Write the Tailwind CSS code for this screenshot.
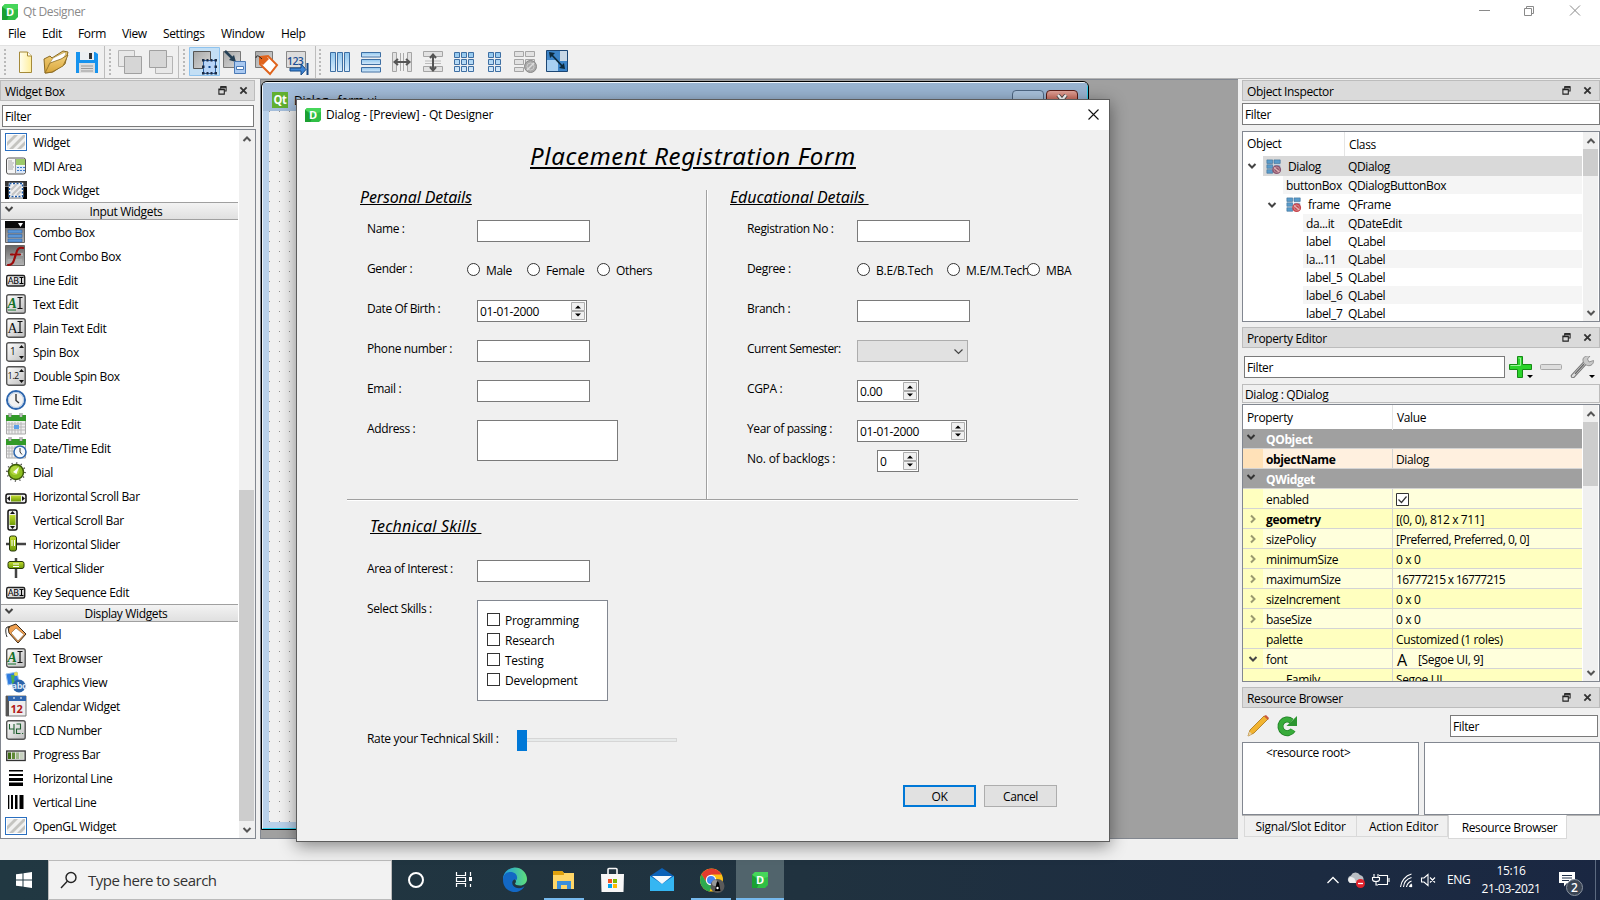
<!DOCTYPE html>
<html lang="en">
<head>
<meta charset="utf-8">
<title>Qt Designer</title>
<script src="https://cdn.jsdelivr.net/npm/@tailwindcss/browser@4"></script>
</head>
<body class="relative w-[1600px] h-[900px] overflow-hidden bg-[#f0f0f0] font-['Open_Sans','Noto_Sans',sans-serif] text-[12px] leading-4 tracking-[-0.36px] text-black whitespace-nowrap">

<svg class="absolute w-0 h-0">
  <defs>
    <linearGradient id="grey" x1="0" y1="0" x2="1" y2="1"><stop offset="0" stop-color="#fff"/><stop offset="1" stop-color="#bdbdbd"/></linearGradient>
    <linearGradient id="dark" x1="0" y1="0" x2="0" y2="1"><stop offset="0" stop-color="#666"/><stop offset="1" stop-color="#b4b4b4"/></linearGradient>
    <linearGradient id="tool" x1="0" y1="0" x2="1" y2="1"><stop offset="0" stop-color="#a8a8a8"/><stop offset="1" stop-color="#d8d8d8"/></linearGradient>
    <linearGradient id="blue" x1="0" y1="0" x2="0" y2="1"><stop offset="0" stop-color="#8fc6ee"/><stop offset="1" stop-color="#d8ebfb"/></linearGradient>
    <linearGradient id="lime" x1="0" y1="0" x2="0" y2="1"><stop offset="0" stop-color="#c3dc30"/><stop offset="1" stop-color="#6f9c08"/></linearGradient>
    <linearGradient id="paper" x1="0" y1="0" x2="1" y2="0"><stop offset="0" stop-color="#fffef0"/><stop offset="1" stop-color="#ffee9a"/></linearGradient>
    <linearGradient id="gold" x1="0" y1="0" x2="0" y2="1"><stop offset="0" stop-color="#f3d27e"/><stop offset="1" stop-color="#d9a63b"/></linearGradient>
    <linearGradient id="edge" x1="0" y1="0" x2="1" y2="0"><stop offset="0" stop-color="#1f9be0"/><stop offset="1" stop-color="#5fe07a"/></linearGradient>
    <symbol id="i-logo" viewBox="0 0 16 16"><path d="M3 0h13v13l-3 3H0V3z" fill="#2fbf45"/><path d="M3 0h13v5L8 7 0 3z" fill="#46d65a"/><path d="M0 3l8 6-3 7H0z" fill="#1ba032"/><text x="8" y="12" text-anchor="middle" font-size="11" font-weight="700" font-family="Open Sans" fill="#fff">D</text></symbol>
    <symbol id="i-stripe" viewBox="0 0 22 18"><rect x=".5" y=".5" width="21" height="17" fill="#fff" stroke="#2a6fc0"/><path d="M2 2h18v14H2z" fill="#f1f1f0"/><path d="M2 9l7-7h4L2 13zM4 16L18 2h2v2L8 16zM12 16l8-8v4l-4 4z" fill="#c4c4c0"/></symbol>
    <symbol id="i-mdi" viewBox="0 0 22 20"><rect x="1.500" y="2" width="19" height="16" rx="2" fill="#f4f4f4" stroke="#555"/><path d="M11 3h9v6h-9z" fill="#9cc96a"/><path d="M11 10h9v7h-9z" fill="#dce9fa"/><path d="M12 11h2v1h-2zm3 0h2v1h-2zm3 0h2v1h-2zm-6 3h2v1h-2zm3 0h2v1h-2zm3 0h2v1h-2z" fill="#3f7fd0"/><path d="M3 5h4M3 7h6M3 9h5M3 11h6M3 13h5" stroke="#aaa"/><path d="M10.500 3v14" stroke="#999"/></symbol>
    <symbol id="i-dock" viewBox="0 0 22 18"><path d="M0 0h22v18H0z" fill="url(#dark)"/><path d="M0 0h22v5H0z" fill="#111" opacity=".6"/><path d="M0 6h4v12H0zM18 6h4v12h-4z" fill="#000"/><rect x="4.500" y="2.500" width="13" height="13" fill="#eee" stroke="#fff" stroke-width="1.500"/><rect x="4.500" y="2.500" width="13" height="13" fill="none" stroke="#1b58a8" stroke-width="1.500" stroke-dasharray="2 1.500"/><path d="M6 9l6-6M7 14l9-9M12 14l4-4" stroke="#c4c4c4" stroke-width="2"/></symbol>
    <symbol id="i-combo" viewBox="0 0 22 22"><path d="M.5.500h19v21H.5z" fill="url(#dark)" stroke="#666"/><path d="M0 0h20v7H0z" fill="#0a0a0a"/><path d="M13 2h5l-2.500 4z" fill="#fff"/><path d="M3 9h14v3H3zM3 13.500h14v3H3zM3 18h14v3H3z" fill="#5a96d8" stroke="#2d5f9e" stroke-width=".5"/></symbol>
    <symbol id="i-font" viewBox="0 0 22 22"><path d="M.5.500h19v20H.5z" fill="url(#dark)" stroke="#666"/><path d="M8 8h10v3H8zM3 14h14v3H3z" fill="#aaa"/><path d="M18 3c-4-1-6 1-7 6l-2 6c-1 4-3 5-6 5M6 9.500h9" fill="none" stroke="#9c0b0b" stroke-width="2.200" stroke-linecap="round"/></symbol>
    <symbol id="i-line" viewBox="0 0 22 22"><rect x="1.700" y="6.500" width="18" height="10.500" rx="1.500" fill="url(#grey)" stroke="#222" stroke-width="1.400"/><text x="2.800" y="14.800" font-size="8.500" letter-spacing="-.4" font-family="DejaVu Sans" fill="#000">AB</text><path d="M14.500 8.500h4M16.500 8.500v6M14.500 14.500h4" stroke="#000"/></symbol>
    <symbol id="i-btn" viewBox="0 0 22 22"><rect x="1.700" y="1.700" width="18.500" height="18.500" rx="2" fill="url(#grey)" stroke="#555" stroke-width="1.400"/></symbol>
    <symbol id="i-text" viewBox="0 0 22 22"><use href="#i-btn"/><text x="2.500" y="15" font-size="14" font-style="italic" font-family="Liberation Serif" fill="#13702a" font-weight="700">A</text><path d="M3 17h8" stroke="#13702a"/><path d="M12.500 4.500h5M15 4.500v11M12.500 15.500h5" stroke="#111" stroke-width="1.200"/></symbol>
    <symbol id="i-plain" viewBox="0 0 22 22"><use href="#i-btn"/><text x="2.500" y="15.500" font-size="14" font-family="Liberation Serif" fill="#111">A</text><path d="M12.500 4.500h5M15 4.500v11M12.500 15.500h5" stroke="#111" stroke-width="1.200"/></symbol>
    <symbol id="i-spin" viewBox="0 0 22 22"><use href="#i-btn"/><text x="5" y="14" font-size="10" font-family="Open Sans" fill="#111">1</text><path d="M14 7l2.500-3L19 7zM14 15l2.500 3L19 15z" fill="#111"/></symbol>
    <symbol id="i-dspin" viewBox="0 0 22 22"><use href="#i-btn"/><text x="2.500" y="14" font-size="9" font-family="Open Sans" letter-spacing="-.5" fill="#111">1.2</text><path d="M14 7l2.500-3L19 7zM14 15l2.500 3L19 15z" fill="#111"/></symbol>
    <symbol id="i-time" viewBox="0 0 22 22"><circle cx="11" cy="11" r="9" fill="#f2f2f2" stroke="#2d66ae" stroke-width="2"/><circle cx="11" cy="11" r="7.500" fill="none" stroke="#b9cde6"/><path d="M11 5v6.500l3 2.500" fill="none" stroke="#333" stroke-width="1.400"/></symbol>
    <symbol id="i-date" viewBox="0 0 22 22"><path d="M1.500 3h19v18h-19z" fill="#eee" stroke="#aaa"/><path d="M1 2h20v6H1z" fill="#329a28"/><path d="M4 9v12M7 9v12M10 9v12M13 9v12M16 9v12M2 11h18M2 14h18M2 17h18" stroke="#b8b8b8"/><path d="M9 12h5v4H9z" fill="#5da0e8"/><path d="M5 0v4M16 0v4" stroke="#888" stroke-width="3"/><path d="M5 0v4M16 0v4" stroke="#eee"/></symbol>
    <symbol id="i-datetime" viewBox="0 0 22 22"><use href="#i-date"/><circle cx="15" cy="15" r="6" fill="#f5f8fc" stroke="#2d66ae" stroke-width="1.500"/><path d="M15 11v4l2 2.500" fill="none" stroke="#333"/></symbol>
    <symbol id="i-dial" viewBox="0 0 22 22"><circle cx="11" cy="11" r="9" fill="none" stroke="#444" stroke-width="1.600" stroke-dasharray="1.200 3.500"/><circle cx="11" cy="11" r="7.500" fill="#8dbf1f" stroke="#3c5a08" stroke-width="1.500"/><circle cx="10" cy="9.500" r="4.500" fill="#c0e050" opacity=".7"/><path d="M8 11l6-5-2.500 7z" fill="#fff"/></symbol>
    <symbol id="i-hscroll" viewBox="0 0 22 22"><rect x="1" y="9" width="20" height="9" rx="2" fill="#eee" stroke="#111" stroke-width="1.500"/><path d="M6 10.500h10v6H6z" fill="url(#lime)"/><path d="M5 11v5l-3-2.500zM17 11v5l3-2.500z" fill="#111"/></symbol>
    <symbol id="i-vscroll" viewBox="0 0 22 22"><rect x="3" y="1" width="9" height="20" rx="2" fill="#eee" stroke="#111" stroke-width="1.500"/><path d="M4.500 6h6v10h-6z" fill="url(#lime)"/><path d="M5 5h5L7.500 2zM5 17h5l-2.500 3z" fill="#111"/></symbol>
    <symbol id="i-hslide" viewBox="0 0 22 22"><path d="M1 11h20" stroke="#444" stroke-width="2.500"/><rect x="4.500" y="3" width="7" height="15" rx="2" fill="url(#lime)" stroke="#26360a"/><path d="M7 7v6M9.500 7v6" stroke="#fff"/></symbol>
    <symbol id="i-vslide" viewBox="0 0 22 22"><path d="M11 1v20" stroke="#444" stroke-width="2.500"/><rect x="3" y="4.500" width="16" height="7" rx="2" fill="url(#lime)" stroke="#26360a"/><path d="M8 7h6M8 9.500h6" stroke="#fff"/></symbol>
    <symbol id="i-label" viewBox="0 0 22 22"><path d="M3 4l8-3 10 10-8 9L4 10z" fill="#f0a050" stroke="#3a2a18"/><path d="M11 5l8 6.500-6 6.500-7-8z" fill="#fff" stroke="#8a5a2a" stroke-width=".6"/><path d="M5 5C0 1 0 9 2 14" fill="none" stroke="#333"/></symbol>
    <symbol id="i-graph" viewBox="0 0 22 22"><path d="M1 3l11-2 2 10-11 3z" fill="#2e7be0" stroke="#9cc5ef"/><path d="M6 4l4 0-1 5 3 3-5 1z" fill="#4caf50"/><circle cx="11" cy="3" r="2" fill="#e4dc52"/><circle cx="14" cy="15" r="6.500" fill="#2b64aa"/><text x="6.500" y="17.500" font-size="9" font-weight="700" font-family="Open Sans" letter-spacing="-.3" fill="#dbe7f5">abc</text></symbol>
    <symbol id="i-cal" viewBox="0 0 22 22"><path d="M1 1h20v20H1z" fill="#eee" stroke="#777"/><path d="M1 1h3v20H1z" fill="#555"/><path d="M3 1h18v5H3z" fill="#2f66b0"/><path d="M8 3h2M15 3h2" stroke="#fff"/><text x="5.500" y="18" font-size="11" font-weight="700" font-family="Open Sans" fill="#b01818">12</text></symbol>
    <symbol id="i-lcd" viewBox="0 0 22 22"><use href="#i-btn"/><path d="M4.500 5v5h4.500M9 5v10M11.500 5h4v5h-4v4.500h4M17 14.500h1.200" fill="none" stroke="#1f6030" stroke-width="1.100"/></symbol>
    <symbol id="i-prog" viewBox="0 0 22 22"><rect x="1.700" y="8" width="18.500" height="9.500" fill="#ddd" stroke="#333" stroke-width="1.300"/><path d="M3 9.500h3v6.500H3z" fill="#3f6b14"/><path d="M7 9.500h3v6.500H7z" fill="#5f8a35"/><path d="M11 9.500h3v6.500h-3z" fill="#9db888"/><path d="M15 9.500h3.500v6.500H15z" fill="#c8d2c0"/></symbol>
    <symbol id="i-hline" viewBox="0 0 22 22"><path d="M4 3h14v1.500H4zM4 7h14v2H4zM4 11h14v3H4zM4 15.500h14v3.500H4z" fill="#000"/></symbol>
    <symbol id="i-vline" viewBox="0 0 22 22"><path d="M3 4h1.300v14H3zM6 4h2v14H6zM10 4h2.500v14H10zM14.500 4h4v14h-4z" fill="#000"/></symbol>
    <symbol id="i-chev" viewBox="0 0 10 10"><path d="M1.500 3L5 6.500 8.500 3" fill="none" stroke="currentColor" stroke-width="2"/></symbol>
    <symbol id="i-float" viewBox="0 0 10 10"><path d="M3 3V1h6v4.500H7" fill="none" stroke="#222" stroke-width="1.200"/><path d="M1 3.500h6V9H1z" fill="none" stroke="#222" stroke-width="1.200"/><path d="M1 4h6M3 1.200h6" stroke="#222" stroke-width="1.600"/></symbol>
    <symbol id="i-x" viewBox="0 0 10 10"><path d="M1.500 1.500l7 7M8.500 1.500l-7 7" stroke="#333" stroke-width="2"/></symbol>
    <symbol id="i-noform" viewBox="0 0 18 18"><path d="M1 1h6.500v4H1zM9 1h7v4H9zM1 6.500h6.500v4H1zM1 12h6.500v4H1z" fill="#5a9ccb" stroke="#3d6f98" stroke-width=".7"/><path d="M9 6.500h7v4H9z" fill="#8ab8d8"/><circle cx="12" cy="12" r="5" fill="currentColor"/><circle cx="12" cy="12" r="3" fill="none" stroke="#d9a5a5" stroke-width=".8"/><path d="M9 9.500l6 5" stroke="#e5b5b5" stroke-width="1.500"/></symbol>
  </defs>
</svg>

<!-- main window -->
<div class="w-[1600px] h-[860px] flex flex-col">
  <header class="h-6 bg-white flex items-center pl-[2px] text-[#8a8a8a]">
    <svg class="w-4 h-4 shrink-0 -mt-px"><use href="#i-logo"/></svg>
    <span class="ml-[5px] tracking-[-0.4px]">Qt Designer</span>
    <div class="ml-auto mr-[5px] flex items-center">
      <svg class="w-[130px] h-5" viewBox="0 0 130 20" fill="none" stroke="#8a8a8a"><path d="M14 8.500h11M59.500 6.500h7v7h-7zM61.500 6V4.500h7v7H67M105 3.500l10 10M115 3.500l-10 10"/></svg>
    </div>
  </header>
  <nav class="h-[21px] bg-white flex items-center pb-[2px]">
    <span class="ml-2 w-[34px]">File</span><span class="w-9">Edit</span><span class="w-11">Form</span><span class="w-[41px]">View</span><span class="w-[58px]">Settings</span><span class="w-[60px]">Window</span><span>Help</span>
  </nav>
  <div class="h-[34px] border-t border-[#e2e2e2] border-b-[#b4b4b4] border-b">
    <svg class="w-[600px] h-8" viewBox="0 46 600 32">
      <g stroke="#b9b9b9" stroke-width="2" stroke-dasharray="2 2"><path d="M5 49v26M110 49v26M184 49v26M320 49v26"/></g>
      <path d="M104.500 45v34M178.500 45v34M315.500 45v34" stroke="#bdbdbd"/>
      <!-- new, open, save -->
      <path d="M19.500 52h8l4 4v16.500h-12z" fill="url(#paper)" stroke="#a58a3a"/><path d="M27.500 52v4h4" fill="#fff" stroke="#a58a3a"/>
      <path d="M45 73l-1-14 6-3 2 2 11-7 5 1-3 12-12 8-7 1z" fill="url(#gold)" stroke="#8a6a22"/><path d="M48 66l5-8 12-6 1 2-4 6z" fill="#fff" stroke="#a58a3a" stroke-width=".6"/><path d="M45 73l5-10 11-4 7-4-5 11-11 6z" fill="url(#gold)" stroke="#8a6a22" stroke-width=".8"/>
      <path d="M76 52h19l3 2v19H76z" fill="#1793ee"/><path d="M80 52h14v8H80z" fill="#eceff2"/><path d="M89 53h3v6h-3z" fill="#333"/><path d="M79 63h16v10H79z" fill="#ddd"/><path d="M81 66h12M81 68.500h12M81 71h12" stroke="#999"/>
      <!-- raise, lower -->
      <g fill="#e8e8e8" stroke="#b4b4b4"><path d="M118.500 50.500h16v16h-16z"/><path d="M124.500 56.500h17v17h-17z" fill="#d6d6d6" stroke="#a0a0a0"/><path d="M155.500 56.500h17v17h-17z"/><path d="M149.500 50.500h17v17h-17z" fill="#d6d6d6" stroke="#a0a0a0"/></g>
      <!-- edit modes -->
      <path d="M189.500 47.500h30v28h-30z" fill="#c3dff5" stroke="#8fc3ee"/>
      <path d="M193.500 51.500h17v17h-17z" fill="url(#tool)" stroke="#555"/><path d="M203.500 60.500h12v13h-12z" fill="#b8d5f8" stroke="#2d5f9e"/><path d="M202 59h2.500v2.500H202zM206.500 59h2v2.500h-2zM210.500 59h2v2.500h-2zM214.500 59h2.500v2.500h-2.500zM202 72h2.500v2.500H202zM206.500 72h2v2.500h-2zM210.500 72h2v2.500h-2zM214.500 72h2.500v2.500h-2.500zM202 65.500h2.500v2.500H202zM214.500 65.500h2.500v2.500h-2.500z" fill="#1b2b44"/><path d="M208.500 66h2v2h-2z" fill="#124a90"/>
      <path d="M223.500 51.500h17v16h-17z" fill="url(#tool)" stroke="#777"/><path d="M225 51l8 8" stroke="#243f55" stroke-width="2.500"/><path d="M236 62l-7-2 5-5z" fill="#243f55"/><path d="M234.500 61.500h11v12h-11z" fill="#a9c9f1" stroke="#4a79b5"/><path d="M236.500 66.500h7v3h-7z" fill="#fff" stroke="#4a79b5"/>
      <path d="M255.500 51.500h17v16h-17z" fill="url(#tool)" stroke="#777"/><path d="M260 57l8-1 9 9-7 9-10-10z" fill="#fff" stroke="#e0631c" stroke-width="2"/><path d="M260 57l6-1 3 3-6 6-3-2z" fill="#e0631c"/><path d="M262 59c-5-5-6-3-6-1" fill="none" stroke="#222"/>
      <path d="M286.500 51.500h19v16h-19z" fill="#ddd" stroke="#888"/><text x="287" y="65" font-size="10.500" letter-spacing="-.6" font-weight="600" font-family="Open Sans" fill="#1c4f94">123</text><path d="M290 68h11v-4l5 5.500-5 5.500v-4h-11z" fill="#3d85d6" stroke="#174a88"/><path d="M307.500 63v12" stroke="#174a88" stroke-width="2"/>
      <!-- layouts -->
      <g fill="url(#blue)" stroke="#3e6fa3"><path d="M330.500 52.500h5v19h-5z"/><path d="M337.500 52.500h5v19h-5z"/><path d="M344.500 52.500h5v19h-5z"/><path d="M361.500 52.500h19v4.500h-19z"/><path d="M361.500 59.500h19v5h-19z"/><path d="M361.500 67.500h19v4.500h-19z"/>
      <path d="M454.500 52.500h5v5h-5zM461.500 52.500h5v5h-5zM468.500 52.500h5v5h-5zM454.500 59.500h5v5h-5zM461.500 59.500h5v5h-5zM468.500 59.500h5v5h-5zM454.500 66.500h5v5h-5zM461.500 66.500h5v5h-5zM468.500 66.500h5v5h-5z"/><path d="M488.500 52.500h5v5h-5zM495.500 52.500h5v5h-5zM488.500 59.500h5v5h-5zM495.500 59.500h5v5h-5zM488.500 66.500h5v5h-5zM495.500 66.500h5v5h-5z"/></g>
      <g fill="#e2e2e2" stroke="#a5a5a5"><path d="M392.500 52.500h4v19h-4zM407.500 52.500h4v19h-4zM423.500 51.500h19v5h-19zM423.500 66.500h19v5h-19z"/><path d="M514.500 51.500h9v5h-9zM525.500 51.500h9v5h-9zM514.500 59.500h9v5h-9zM514.500 67.500h9v4h-9zM525.500 59.500h9v5h-9z"/></g>
      <path d="M400.500 53v18M403.500 53v18" stroke="#aaa"/><path d="M395 62h14M398 59l-3.500 3 3.500 3M406 59l3.500 3-3.500 3" stroke="#555" stroke-width="2" fill="none"/>
      <path d="M425 61h16M425 63.500h16" stroke="#bbb"/><path d="M433 55v15M430 58l3-3.500 3 3.500M430 67l3 3.500 3-3.500" stroke="#555" stroke-width="2" fill="none"/>
      <circle cx="530.500" cy="66.500" r="6" fill="#aaa" stroke="#888"/><circle cx="530.500" cy="66.500" r="3.500" fill="none" stroke="#ccc"/><path d="M527 70l7-7" stroke="#ddd" stroke-width="1.500"/>
      <path d="M546.500 50.500h21v21h-21z" fill="#3c84c8" stroke="#1c4674"/><path d="M547 60h11v11h-11z" fill="#a9d0f2"/><path d="M560 51h7v10h-7z" fill="#c9d8e6"/><path d="M551 54l12 13" stroke="#0c2a3c" stroke-width="1.800"/><path d="M549 52l6 1-5 5zM565 69l-6-1 5-5z" fill="#0c2a3c"/>
    </svg>
  </div>

  <main class="h-[760px] flex">
    <!-- widget box -->
    <aside class="w-64 pt-px flex flex-col">
      <div class="w-[255px] h-[21px] bg-[#dadada] border border-[#bcbcbc] flex items-center pl-1">
        <span class="pt-[2px]">Widget Box</span>
        <svg class="ml-auto w-[9px] h-[9px]"><use href="#i-float"/></svg><svg class="ml-3 mr-[6px] w-[9px] h-[9px]"><use href="#i-x"/></svg>
      </div>
      <div class="mt-1 ml-[2px] w-[252px] h-[22px] bg-white border border-[#7a7a7a] flex items-center pl-[2px] pt-px">Filter</div>
      <div class="mt-[2px] h-[710px] bg-white border border-[#828790] flex">
        <div class="w-[237px] h-[708px] overflow-hidden" id="widgets"></div>
        <div class="w-4 ml-[1px] pr-px bg-[#f0f0f0] flex flex-col items-center">
          <svg class="w-[10px] h-[10px] mt-1 rotate-180 text-[#555]"><use href="#i-chev"/></svg>
          <div class="mt-auto w-[15px] h-[331px] bg-[#cdcdcd]"></div>
          <svg class="w-[10px] h-[10px] mt-1 mb-[3px] text-[#555]"><use href="#i-chev"/></svg>
        </div>
      </div>
    </aside>

    <!-- MDI area -->
    <section class="relative ml-1 w-[978px] h-[760px] bg-[#a0a0a0] border-t border-l border-b border-[#828790]">
      <div class="absolute left-0 top-px w-[828px] h-[749px] rounded-t-md border border-black overflow-hidden">
        <div class="h-full rounded-t-[5px] border border-[#eef4fa] border-b-[#2fd0ee] border-r-[#2fd0ee] bg-[#b9d1ea]">
          <div class="h-7 bg-gradient-to-r from-[#a5bedb] via-[#99b4d1] to-[#99b4d1] flex items-start pl-[9px] pt-[9px]">
            <svg class="w-4 h-4" viewBox="0 0 16 16"><path d="M0 0h16v16H0z" fill="#62b02f"/><text x="1.500" y="12" font-size="12" font-weight="700" font-family="Open Sans" fill="#fff" textLength="13" lengthAdjust="spacingAndGlyphs">Qt</text></svg>
            <span class="ml-[6px] mt-px tracking-[-0.2px]">Dialog - form.ui</span>
            <div class="ml-auto w-8 h-5 -mt-[2px] border border-[#4e6682] rounded-t-sm bg-[#a9c2dc] flex justify-center pt-2"><div class="w-3 h-2 border border-[#555] bg-white"></div></div>
            <div class="ml-[2px] mr-[9px] w-8 h-5 -mt-[2px] border border-[#571c16] rounded-t-sm bg-gradient-to-b from-[#e0a49a] to-[#b02010] flex justify-center pt-[3px]"><svg class="w-3 h-3" viewBox="0 0 12 12"><path d="M2 1l8 10M10 1L2 11" stroke="#444" stroke-width="4"/><path d="M2 1l8 10M10 1L2 11" stroke="#fff" stroke-width="2.400"/></svg></div>
          </div>
          <div class="ml-[6px] h-[711px] bg-[#f0f0f0] bg-[radial-gradient(circle_at_0.5px_0.5px,#909090_0.7px,transparent_0.8px)] bg-size-[10px_10px]"></div>
        </div>
      </div>
    </section>

    <!-- right docks -->
    <aside class="ml-1 w-[358px] pt-px flex flex-col">
      <div class="h-[21px] bg-[#dadada] border border-[#bcbcbc] flex items-center pl-1">
        <span class="pt-[2px]">Object Inspector</span>
        <svg class="ml-auto w-[9px] h-[9px]"><use href="#i-float"/></svg><svg class="ml-3 mr-[7px] w-[9px] h-[9px]"><use href="#i-x"/></svg>
      </div>
      <div class="mt-[2px] h-[22px] bg-white border border-[#7a7a7a] flex items-center pl-[2px] pt-px">Filter</div>
      <div class="mt-[6px] h-[191px] bg-white border border-[#828790] flex overflow-hidden">
        <div class="w-[339px] h-[189px] overflow-hidden" id="objects">
          <div class="h-6 flex items-center"><span class="w-[102px] pl-1 border-r border-[#e5e5e5] leading-[26px]">Object</span><span class="pl-1 pt-[2px]">Class</span></div>
        </div>
        <div class="w-[15px] ml-px bg-[#f0f0f0] flex flex-col items-center">
          <svg class="w-[10px] h-[10px] mt-1 mb-[3px] rotate-180 text-[#555]"><use href="#i-chev"/></svg>
          <div class="w-[15px] h-[27px] bg-[#cdcdcd]"></div>
          <svg class="w-[10px] h-[10px] mt-auto mb-[3px] text-[#555]"><use href="#i-chev"/></svg>
        </div>
      </div>

      <div class="mt-[5px] h-[21px] bg-[#dadada] border border-[#bcbcbc] flex items-center pl-1">
        <span class="pt-[2px]">Property Editor</span>
        <svg class="ml-auto w-[9px] h-[9px]"><use href="#i-float"/></svg><svg class="ml-3 mr-[7px] w-[9px] h-[9px]"><use href="#i-x"/></svg>
      </div>
      <div class="mt-2 h-[22px] flex">
        <div class="ml-[2px] w-[261px] h-[22px] bg-white border border-[#7a7a7a] flex items-center pl-[2px] pt-px">Filter</div>
        <svg class="w-[95px] h-[22px]" viewBox="-1 0 95 22"><path d="M11.500.500h5v8h9v5h-9v8h-5v-8h-8v-5h8z" fill="#2bd32b" stroke="#158a15"/><path d="M12.500 2h2v7.500h-10" fill="none" stroke="#9bf09b"/><path d="M21 19h6l-3 3zM83 19h6l-3 3z" fill="#000"/><rect x="34.500" y="8.500" width="21" height="5" rx="1" fill="#ddd" stroke="#a9a9a9"/><path d="M67 20L79 7" stroke="#777" stroke-width="4.500" stroke-linecap="round"/><path d="M67 20L79 7" stroke="#ddd" stroke-width="2.500" stroke-linecap="round"/><path d="M69 18L78 8" stroke="#666" stroke-width="1.200"/><path d="M77 3c1-3 5-4 7-3l-2.500 3 1.500 3 4.500-1.500c.5 3-2.500 6-6 5s-5-4-4.500-6.500z" fill="#c9c9c9" stroke="#777" stroke-width=".7"/></svg>
      </div>
      <div class="mt-[6px] h-[19px] border border-[#bcbcbc] pl-[2px] leading-5 overflow-hidden">Dialog : QDialog</div>
      <div class="mt-px h-[278px] bg-white border border-[#828790] flex overflow-hidden">
        <div class="w-[339px] h-[276px] overflow-hidden" id="props">
          <div class="h-6 flex items-center"><span class="w-[150px] pl-1 border-r border-[#e5e5e5] leading-[25px]">Property</span><span class="pl-1 pt-px">Value</span></div>
        </div>
        <div class="w-[15px] ml-px bg-[#f0f0f0] flex flex-col items-center">
          <svg class="w-[10px] h-[10px] mt-1 mb-[3px] rotate-180 text-[#555]"><use href="#i-chev"/></svg>
          <div class="w-[15px] h-[64px] bg-[#cdcdcd]"></div>
          <svg class="w-[10px] h-[10px] mt-auto mb-[3px] text-[#555]"><use href="#i-chev"/></svg>
        </div>
      </div>

      <div class="mt-[5px] h-[21px] bg-[#dadada] border border-[#bcbcbc] flex items-center pl-1">
        <span class="pt-[2px]">Resource Browser</span>
        <svg class="ml-auto w-[9px] h-[9px]"><use href="#i-float"/></svg><svg class="ml-3 mr-[7px] w-[9px] h-[9px]"><use href="#i-x"/></svg>
      </div>
      <div class="mt-[7px] h-[22px] flex">
        <svg class="ml-[5px] w-14 h-[22px]" viewBox="0 0 56 22"><path d="M1 21l2-6L17 1l4 3L7 18z" fill="#f2b431" stroke="#a87316" stroke-width=".8"/><path d="M17 1l2-1 3 3-1 2z" fill="#c9583c"/><path d="M1 21l1.500-4.500L5 19z" fill="#e8d2a8"/><path d="M44.500 6a6.800 6.800 0 1 0 1.500 9" fill="none" stroke="#1f7f24" stroke-width="6"/><path d="M44.500 6a6.800 6.800 0 1 0 1.500 9" fill="none" stroke="#38ab3a" stroke-width="4.500"/><path d="M50 1v10H39.500z" fill="#2c9530"/></svg>
        <div class="ml-auto mr-[2px] w-[148px] h-[22px] bg-white border border-[#7a7a7a] flex items-center pl-[2px] pt-px">Filter</div>
      </div>
      <div class="mt-[5px] h-[73px] flex justify-between">
        <div class="w-[177px] bg-white border border-[#828790] pl-[23px] pt-[2px]">&lt;resource root&gt;</div>
        <div class="w-[176px] bg-white border border-[#828790]"></div>
      </div>
      <div class="flex pl-[2px] h-6 border-t border-[#b5b5b5] tracking-[-0.2px]">
        <div class="w-[113px] h-[21px] border border-t-0 border-[#d9d9d9] text-center leading-[22px] tracking-[-0.28px]">Signal/Slot Editor</div>
        <div class="w-[91px] h-[21px] pl-[3px] border border-t-0 border-l-0 border-[#d9d9d9] text-center leading-[22px]">Action Editor</div>
        <div class="w-[119px] h-6 pl-[4px] -mt-px bg-white border border-t-0 border-[#d9d9d9] text-center leading-[26px] tracking-[-0.36px]">Resource Browser</div>
      </div>
    </aside>
  </main>
</div>

<!-- preview dialog, floating above the main window -->
<div class="absolute left-[296px] top-[99px] w-[814px] h-[743px] border border-[#5c5c5c] bg-[#f0f0f0] shadow-[0_4px_16px_rgba(0,0,0,0.45)] flex flex-col">
  <div class="h-[30px] bg-white flex items-center pl-2">
    <svg class="w-4 h-[14px]" viewBox="0 0 16 14"><use href="#i-logo" y="-1" width="16" height="16"/></svg>
    <span class="ml-[5px] tracking-[-0.2px]">Dialog - [Preview] - Qt Designer</span>
    <svg class="ml-auto mr-[10px] -mt-[2px] w-[11px] h-[11px]" viewBox="0 0 11 11"><path d="M.5.500l10 10M10.500.500l-10 10" stroke="#111" stroke-width="1.100"/></svg>
  </div>
  <h1 class="ml-[233px] mt-2 h-[37px] leading-9 text-[24px] tracking-[0.68px] italic underline decoration-2 underline-offset-2 font-['Noto_Sans',sans-serif]">Placement Registration Form</h1>
  <div class="mt-[15px] ml-[50px] w-[731px] h-[310px] border-b border-[#a0a0a0] flex shadow-[0_1px_0_#fff]">
    <div class="w-[360px] h-[309px] border-r border-[#a0a0a0] shadow-[1px_0_0_#fff]">
      <h2 class="ml-[13px] h-5 -mt-[3px] leading-5 text-[16px] italic underline tracking-[-0.15px] font-['Noto_Sans',sans-serif]">Personal Details</h2>
      <div class="mt-[13px] flex h-10"><span class="ml-5 mt-px w-[110px]">Name :</span><div class="w-[113px] h-[22px] bg-white border border-[#7a7a7a]"></div></div>
      <div class="flex h-10"><span class="ml-5 mt-px w-[100px]">Gender :</span>
        <div class="mt-[3px] flex h-[13px] items-start" id="gender"></div></div>
      <div class="flex h-10"><span class="ml-5 mt-px w-[110px] tracking-[-0.42px]">Date Of Birth :</span><div class="spin w-[110px] h-[22px] bg-white border border-[#7a7a7a] flex items-center pl-[2px]"><span class="pt-px">01-01-2000</span></div></div>
      <div class="flex h-10"><span class="ml-5 mt-px w-[110px]">Phone number :</span><div class="w-[113px] h-[22px] bg-white border border-[#7a7a7a]"></div></div>
      <div class="flex h-10"><span class="ml-5 mt-px w-[110px]">Email :</span><div class="w-[113px] h-[22px] bg-white border border-[#7a7a7a]"></div></div>
      <div class="flex h-10"><span class="ml-5 mt-px w-[110px]">Address :</span><div class="w-[141px] h-[41px] bg-white border border-[#7a7a7a]"></div></div>
    </div>
    <div class="w-[371px]">
      <h2 class="ml-[23px] h-5 -mt-[3px] leading-5 text-[16px] italic underline tracking-[-0.1px] whitespace-pre font-['Noto_Sans',sans-serif]">Educational Details </h2>
      <div class="mt-[13px] flex h-10"><span class="ml-10 mt-px w-[110px]">Registration No :</span><div class="w-[113px] h-[22px] bg-white border border-[#7a7a7a]"></div></div>
      <div class="flex h-10"><span class="ml-10 mt-px w-[110px] shrink-0">Degree :</span>
        <div class="mt-[3px] flex h-[13px] items-start shrink-0 tracking-[-0.22px]" id="degree"></div></div>
      <div class="flex h-10"><span class="ml-10 mt-px w-[110px]">Branch :</span><div class="w-[113px] h-[22px] bg-white border border-[#7a7a7a]"></div></div>
      <div class="flex h-10"><span class="ml-10 mt-px w-[110px] tracking-[-0.5px]">Current Semester:</span><div class="w-[111px] h-[22px] bg-[#e1e1e1] border border-[#adadad] flex items-center justify-end pr-1"><svg class="w-[9px] h-[9px] mt-px" viewBox="0 0 9 9"><path d="M.5 2.500l4 4 4-4" fill="none" stroke="#444" stroke-width="1.200"/></svg></div></div>
      <div class="flex h-10"><span class="ml-10 mt-px w-[110px]">CGPA :</span><div class="spin w-[62px] h-[22px] bg-white border border-[#7a7a7a] flex items-center pl-[2px]"><span class="pt-px">0.00</span></div></div>
      <div class="flex h-[30px]"><span class="ml-10 mt-px w-[110px]">Year of passing :</span><div class="spin w-[110px] h-[22px] bg-white border border-[#7a7a7a] flex items-center pl-[2px]"><span class="pt-px">01-01-2000</span></div></div>
      <div class="flex h-10"><span class="ml-10 mt-px w-[130px] tracking-[-0.2px]">No. of backlogs :</span><div class="spin w-[42px] h-[22px] bg-white border border-[#7a7a7a] flex items-center pl-[2px]"><span class="pt-px">0</span></div></div>
    </div>
  </div>
  <h2 class="mt-4 ml-[73px] h-5 leading-[21px] text-[16px] italic underline tracking-[0.15px] whitespace-pre font-['Noto_Sans',sans-serif]">Technical Skills </h2>
  <div class="mt-6 flex h-10"><span class="ml-[70px] mt-px w-[110px] tracking-[-0.4px]">Area of Interest :</span><div class="w-[113px] h-[22px] bg-white border border-[#7a7a7a]"></div></div>
  <div class="flex h-[130px]"><span class="ml-[70px] mt-px w-[110px]">Select Skills :</span>
    <div class="w-[131px] h-[101px] bg-white border border-[#828790] pl-[9px] pt-3 flex flex-col" id="skills"></div></div>
  <div class="flex h-[55px]"><span class="ml-[70px] mt-px w-[150px] tracking-[-0.33px]">Rate your Technical Skill :</span>
    <div class="w-[10px] h-[21px] bg-[#0078d7]"></div><div class="mt-2 w-[150px] h-1 bg-[#e7eaea] border border-l-0 border-[#d6d6d6]"></div></div>
  <div class="flex ml-[606px] gap-2">
    <div class="w-[73px] h-[22px] bg-[#e1e1e1] border-2 border-[#0078d7] text-center leading-[19px]">OK</div>
    <div class="w-[73px] h-[22px] bg-[#e1e1e1] border border-[#adadad] text-center leading-[21px]">Cancel</div>
  </div>
</div>

<!-- taskbar -->
<footer class="w-[1600px] h-10 flex bg-gradient-to-r from-[#213842] via-[#20323f] to-[#1a2742] text-white tracking-normal">
  <div class="w-12 flex items-center justify-center"><svg class="w-4 h-4" viewBox="0 0 16 16"><path d="M0 2.300L6.500 1.400v6.100H0zM7.500 1.200L16 0v7.500H7.500zM0 8.500h6.500v6.100L0 13.700zM7.500 8.500H16V16l-8.500-1.200z" fill="#fff"/></svg></div>
  <div class="w-[344px] bg-[#f2f2f2] border border-[#bbb] flex items-center pl-[11px] text-[#333]">
    <svg class="w-[18px] h-[18px]" viewBox="0 0 18 18" fill="none" stroke="#222" stroke-width="1.400"><circle cx="11" cy="6.500" r="5"/><path d="M7.300 10.300L1 17"/></svg>
    <span class="ml-[10px] text-[15px] tracking-[-0.5px]">Type here to search</span>
  </div>
  <svg class="w-[408px] h-10" viewBox="392 860 408 40">
    <path d="M736 860h48v40h-48z" fill="#51646c"/><path d="M544 898h40v2h-40zM691 898h40v2h-40zM736 898h48v2h-48z" fill="#76b9ed"/>
    <circle cx="416" cy="880" r="7" fill="none" stroke="#fff" stroke-width="2"/>
    <path d="M456.500 872v3.500h9V872M456.500 887v-3.500h9v3.500M456.500 877.500h9v4h-9zM470.500 872v4M470.500 884v3" fill="none" stroke="#fff" stroke-width="1.200"/><path d="M469 877h3v4h-3z" fill="#fff"/>
    <path d="M503 880a12 12 0 0 1 24-1c0 4-3 6.500-7 6.500-3 0-5-1-5-2 2-2 1-6-4-6-4 0-7 1-8 2.500z" fill="url(#edge)"/><path d="M503 880c0-6 4-8 7.500-8 5 0 8 4 6 8-3-2-6 2-3 6 3 3 8 3 11 0-2 4-6 6-9.500 6-7 0-12-5-12-12z" fill="#1368c4"/>
    <path d="M553 871h9l2 2h10v16h-21z" fill="#ffd667"/><path d="M553 871h9l2 2v2h-11z" fill="#e0a10c"/><path d="M557 889v-8h14v8h-4v-4h-6v4z" fill="#3b8fdc"/>
    <path d="M601 874h23l-.5 18h-22z" fill="#f7f7f7"/><path d="M608 874v-4.500q0-1 1-1h7q1 0 1 1v4.500" fill="none" stroke="#f7f7f7" stroke-width="1.600"/><path d="M608 879h4v4h-4z" fill="#f25022"/><path d="M613 879h4v4h-4z" fill="#7fba00"/><path d="M608 884h4v4h-4z" fill="#00a4ef"/><path d="M613 884h4v4h-4z" fill="#ffb900"/>
    <path d="M650 876l12-8 12 8v15h-24z" fill="#0b62b8"/><path d="M650 876l12 8 12-8v15h-24z" fill="#35b6f2"/><path d="M652 876h20l-10 8z" fill="#f5fafd"/>
    <circle cx="711.500" cy="880" r="11.500" fill="#fbc116"/><path d="M701.500 874.500a11.500 11.500 0 0 1 20-0h-10l-5 8z" fill="#e33b2e"/><path d="M701.500 874.500l5.500 8.500 5 2.500-2.500 6a11.500 11.500 0 0 1-8-17z" fill="#2da94f"/><circle cx="711" cy="880" r="5.200" fill="#fff"/><circle cx="711" cy="880" r="4" fill="#4285f4"/><circle cx="717.500" cy="886" r="7" fill="#5a5a5a"/><circle cx="715" cy="883" r="3" fill="#999"/><path d="M715 891l1.500-8 1-2 1.500 2 1.500 8z" fill="#000"/><circle cx="717.500" cy="888" r="1.200" fill="#fff"/>
    <use href="#i-logo" x="750" y="872" width="20" height="16"/>
  </svg>
  <div class="ml-auto flex items-center">
    <svg class="w-[120px] h-10" viewBox="1320 860 120 40" fill="none" stroke="#fff" stroke-width="1.300">
      <path d="M1327.500 883l5.500-5.500 5.500 5.500"/>
      <path d="M1350 883a4 4 0 0 1 1-7.500 5 5 0 0 1 9-.5q4 1 3.500 5v3z" fill="#b9bec3" stroke="none"/><path d="M1350 883a3.500 3.500 0 0 1 0-6q5-1 6 6z" fill="#eee" stroke="none"/><circle cx="1360.500" cy="883.500" r="4.500" fill="#e0222c" stroke="none"/><path d="M1358 883.500h5"/>
      <path d="M1379 875.500h8.500v9H1378M1374 874v3M1378 874v3M1372.500 877.500h7v2q0 2-3.500 2t-3.500-2zM1376 881v4h2M1389 878v4" stroke-width="1.100"/>
      <path d="M1400.500 887a15 15 0 0 1 11-13M1403.500 887a11 11 0 0 1 8-9.500M1406.500 887a8 8 0 0 1 5-6M1409.500 887a4 4 0 0 1 2.500-3" stroke-width="1.100"/><circle cx="1411" cy="886" r="1.300" fill="#fff" stroke="none"/>
      <path d="M1421.500 878h2.500l4-3.500v11l-4-3.500h-2.500zM1430 877.500l5 5M1435 877.500l-5 5" stroke-width="1.100"/>
    </svg>
    <span class="ml-[7px] w-[26px] tracking-[-0.3px]">ENG</span>
    <div class="ml-[5px] w-[66px] text-center leading-[18px] tracking-[-0.35px]">15:16<br>21-03-2021</div>
    <svg class="ml-[11px] w-[42px] h-10" viewBox="1555 860 42 40"><path d="M1559 872h16v11h-8l-3 3.500V883h-5z" fill="#fff"/><path d="M1562 875.500h10M1562 878h10M1562 880.500h7" stroke="#20304a"/><circle cx="1574.500" cy="887.500" r="8" fill="#3a4453" stroke="#8a93a0"/><text x="1574.500" y="892" text-anchor="middle" font-size="12" font-weight="600" font-family="Open Sans" fill="#fff">2</text><path d="M1595.500 860v40" stroke="#5c6a80"/></svg>
    <div class="w-[3px]"></div>
  </div>
</footer>

<script>
const icon = (name, cls) => `<svg class="${cls}"><use href="#i-${name}"/></svg>`;

const widgets = [['stripe','Widget'],['mdi','MDI Area'],['dock','Dock Widget'],['#','Input Widgets'],['combo','Combo Box'],['font','Font Combo Box'],['line','Line Edit'],['text','Text Edit'],['plain','Plain Text Edit'],['spin','Spin Box'],['dspin','Double Spin Box'],['time','Time Edit'],['date','Date Edit'],['datetime','Date/Time Edit'],['dial','Dial'],['hscroll','Horizontal Scroll Bar'],['vscroll','Vertical Scroll Bar'],['hslide','Horizontal Slider'],['vslide','Vertical Slider'],['line','Key Sequence Edit'],['#','Display Widgets'],['label','Label'],['text','Text Browser'],['graph','Graphics View'],['cal','Calendar Widget'],['lcd','LCD Number'],['prog','Progress Bar'],['hline','Horizontal Line'],['vline','Vertical Line'],['stripe','OpenGL Widget']];
document.getElementById('widgets').innerHTML = widgets.map(([i, t]) => i === '#'
  ? `<div class="h-[18px] border-y border-[#a0a0a0] bg-gradient-to-b from-[#f3f3f3] to-[#e0e0e0] flex items-center">${icon('chev','w-[10px] h-[10px] ml-[3px] -mt-1 text-[#444]')}<span class="flex-1 text-center pt-px">${t}</span></div>`
  : `<div class="h-6 flex items-center pl-1">${icon(i,'w-[22px] h-[22px]')}<span class="ml-[6px] pt-[2px]">${t}</span></div>`).join('');

const objects = [['Dialog','QDialog',0],['buttonBox','QDialogButtonBox',1],['frame','QFrame',2],['da...it','QDateEdit',3],['label','QLabel',4],['la...11','QLabel',3],['label_5','QLabel',4],['label_6','QLabel',3],['label_7','QLabel',4]];
document.getElementById('objects').innerHTML += objects.map(([o, c, k]) => {
  const cls = `<span class="pl-1">${c}</span></div>`;
  if (k === 0) return `<div class="h-5 flex items-center">${icon('chev','w-[10px] h-[10px] ml-[4px] mr-[6px] text-[#444]')}<div class="flex-1 h-5 bg-[#d9d9d9] flex items-center pt-px">${icon('noform','w-4 h-4 ml-[3px] text-[#8a5570]')}<span class="ml-[6px] w-[56px]">${o}</span>${cls}</div>`;
  if (k === 1) return `<div class="ml-10 h-[18px] bg-[#f5f5f5] flex items-center pt-[2px]"><span class="w-[61px] pl-[3px]">${o}</span>${cls}`;
  if (k === 2) return `<div class="h-5 flex items-center pt-px">${icon('chev','w-[10px] h-[10px] ml-[24px] mr-[9px] text-[#444]')}${icon('noform','w-4 h-4 text-[#c8424a]')}<span class="ml-[6px] w-[36px]">${o}</span>${cls}`;
  return `<div class="ml-[60px] h-[18px] flex items-center pt-[2px] ${k === 3 ? 'bg-[#f5f5f5]' : 'bg-white'}"><span class="w-[41px] pl-[3px]">${o}</span>${cls}`;
}).join('');

const props = [['g','QObject'],['o','objectName','Dialog'],['g','QWidget'],['','enabled','check'],['>','geometry','[(0, 0), 812 x 711]'],['>','sizePolicy','[Preferred, Preferred, 0, 0]'],['>','minimumSize','0 x 0'],['>','maximumSize','16777215 x 16777215'],['>','sizeIncrement','0 x 0'],['>','baseSize','0 x 0'],['','palette','Customized (1 roles)'],['v','font','[Segoe UI, 9]'],['f','Family','Segoe UI']];
document.getElementById('props').innerHTML += props.map(([k, n, v], i) => {
  if (k === 'g') return `<div class="h-5 bg-[#a0a0a0] border-b border-[#d4d4d4] flex items-center text-white font-bold">${icon('chev','w-[10px] h-[10px] ml-[3px] mr-[10px] -mt-1 text-[#333]')}<span class="pt-[3px]">${n}</span></div>`;
  const bg = k === 'o' ? 'bg-[#fff0df]' : i % 2 ? 'bg-[#ffffdc]' : 'bg-[#ffffbf]';
  const side = k === 'o' ? 'bg-[#ffe1b8]' : 'bg-[#ffffbf]';
  const bold = n === 'objectName' || n === 'geometry' ? 'font-bold' : '';
  const arrow = k === '>' ? icon('chev','w-[10px] h-[10px] -rotate-90 text-[#999970]') : k === 'v' ? icon('chev','w-[10px] h-[10px] text-[#444]') : '';
  const val = v === 'check' ? '<svg class="w-[13px] h-[13px] -mt-px" viewBox="0 0 13 13"><path d="M.5.500h12v12H.5z" fill="#fff" stroke="#333"/><path d="M2.500 6.500l3 3 5-6" fill="none" stroke="#333" stroke-width="1.200"/></svg>'
    : k === 'v' ? `<span class="w-[22px] pl-px text-[16px] leading-4">A</span>${v}` : v;
  return `<div class="h-5 flex border-b border-[#d4d4d4] ${bg}"><div class="w-5 flex items-center justify-center ${side}">${arrow}</div><div class="w-[130px] border-r border-[#d4d4d4] pt-[3px] ${k === 'f' ? 'pl-[23px]' : 'pl-[3px]'} ${bold}">${n}</div><div class="flex items-center pl-[3px] pt-[3px] ${n === 'maximumSize' ? 'tracking-[-0.7px]' : n === 'sizePolicy' ? 'tracking-[-0.5px]' : ''}">${val}</div></div>`;
}).join('');

const radio = (w, t) => `<div class="flex ${w}"><div class="w-[13px] h-[13px] shrink-0 rounded-full border border-[#333] bg-white"></div><span class="ml-[6px] -mt-px leading-[18px]">${t}</span></div>`;
document.getElementById('gender').innerHTML = radio('w-[60px]','Male') + radio('w-[70px]','Female') + radio('w-[70px]','Others');
document.getElementById('degree').innerHTML = radio('w-[90px]','B.E/B.Tech') + radio('w-[80px]','M.E/M.Tech') + radio('w-[60px]','MBA');

document.getElementById('skills').innerHTML = ['Programming','Research','Testing','Development'].map(t =>
  `<div class="h-5 flex"><div class="w-[13px] h-[13px] border border-[#333] bg-white"></div><span class="ml-[5px] leading-[16px] tracking-[-0.25px]">${t}</span></div>`).join('');

document.querySelectorAll('.spin').forEach(e => e.insertAdjacentHTML('beforeend',
  '<svg class="ml-auto mr-px w-[14px] h-[18px]" viewBox="0 0 14 18"><path d="M.5.500h13v8H.5zM.5 9.500h13v8H.5z" fill="#f0f0f0" stroke="#adadad"/><path d="M4 6.500l3-3 3 3zM4 11.500l3 3 3-3z" fill="#000"/></svg>'));
</script>
</body>
</html>
